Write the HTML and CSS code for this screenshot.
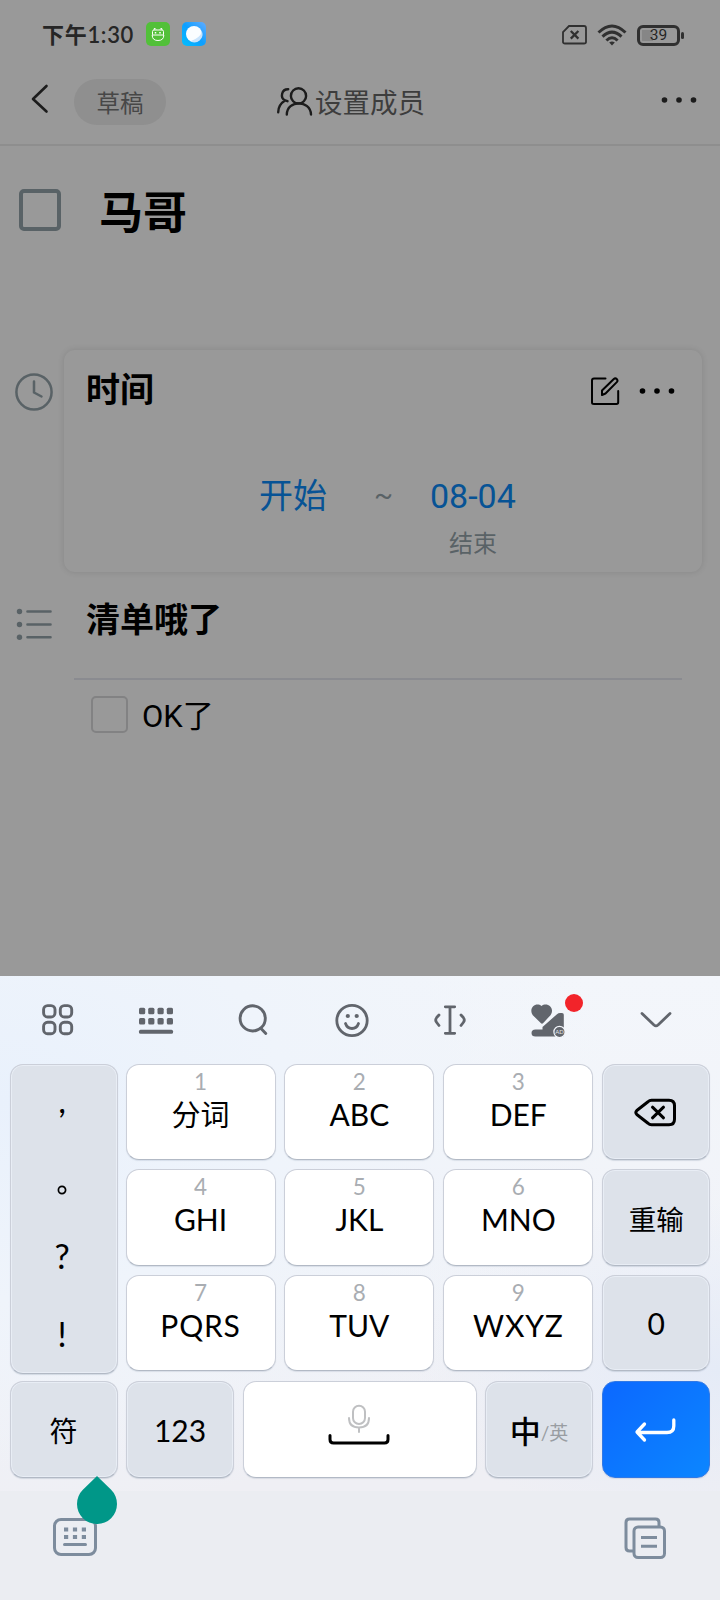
FILE: index.html
```
<!DOCTYPE html>
<html lang="zh-CN">
<head>
<meta charset="utf-8">
<title>设置成员</title>
<link rel="stylesheet" href="styles.css">
</head>
<body>
<div class="app">
  <div class="status">
    <span class="time">下午1:30</span>
    <svg class="app-icon" width="24" height="24" viewBox="0 0 24 24"><rect width="24" height="24" rx="5" fill="#52c039"/><g fill="none" stroke="#fff" stroke-width="1" stroke-linejoin="round"><path d="M6.500 12.800V9.500Q6.500 8 8 8h8q1.500 0 1.500 1.500v3.300M6.200 13h11.600q0 5.500-5.800 5.500T6.200 13zM8 8l.5-2 1.500 1.500M16 8l-.5-2L14 7.500"/></g><path d="M9.500 10v1.500M14 10v1.500" stroke="#fff" stroke-width="1.500"/></svg>
    <svg class="app-icon second" width="24" height="24" viewBox="0 0 24 24"><defs><linearGradient id="sky" x1="0" y1="1" x2="1" y2="0"><stop offset="0" stop-color="#00c0ff"/><stop offset=".5" stop-color="#0e9fff"/><stop offset="1" stop-color="#62abff"/></linearGradient></defs><rect width="24" height="24" rx="5" fill="url(#sky)"/><circle cx="12" cy="12" r="8" fill="#fafdff"/><path d="M20 9.500Q18 16 8.500 19.200A8 8 0 0 0 20 9.500z" fill="#c9e4fc"/></svg>
    <div class="status-right">
      <svg width="25" height="20" viewBox="0 0 25 20" fill="none" stroke="#303030" stroke-width="1.800"><path d="M7 1h15q2 0 2 2v14q0 1.500-2 1.500H3q-2 0-2-1.500V7z"/><path d="M8.800 6l7.600 7.600M16.400 6l-7.600 7.600" stroke-width="2.300"/></svg>
      <svg width="30" height="22" viewBox="0 0 30 22" fill="none" stroke="#303030" stroke-width="3"><path d="M1.500 8.500Q15-4.500 28.500 8.500M5.500 12.600Q15 3.500 24.500 12.600M9.400 16.500Q15 11 20.600 16.500"/><path d="M12.200 18.500q2.800-2 5.600 0L15 21.500z" fill="#303030" stroke="none"/></svg>
      <div class="battery"><span>39</span></div>
    </div>
  </div>
  <div class="header">
    <svg class="back" width="18" height="30" viewBox="0 0 18 30" fill="none" stroke="#1c1c1c" stroke-width="2.600" stroke-linecap="round" stroke-linejoin="round"><path d="M15.500 2L2 15l13.500 12.500"/></svg>
    <span class="draft">草稿</span>
    <svg class="people" width="36" height="30" viewBox="0 0 36 30" fill="none" stroke="#1c1c1c" stroke-width="2.400" stroke-linecap="round"><circle cx="21.500" cy="8.900" r="7.600"/><path d="M9.800 27.500C10 12.700 33.500 12.700 34 27.500M11.200 2.200C4.500 2 2.800 10.700 8 13.400Q1.200 17.700 1.200 25.200M8 13.400l2.500.8"/></svg>
    <span class="members">设置成员</span>
    <svg class="dots" width="36" height="8" viewBox="0 0 36 8" fill="#1c1c1c"><circle cx="3.500" cy="4" r="2.800"/><circle cx="18" cy="4" r="2.800"/><circle cx="32.500" cy="4" r="2.800"/></svg>
  </div>
  <div class="title-row"><span class="check"></span><span class="title">马哥</span></div>
  <div class="time-row">
    <svg class="clock" width="38" height="38" viewBox="0 0 38 38" fill="none" stroke="#596266" stroke-width="2.500" stroke-linecap="round" stroke-linejoin="round"><circle cx="19" cy="19" r="17.600"/><path d="M19 8.500V19.500l7.500 4"/></svg>
    <div class="card">
      <div class="card-head">
        <span class="heading">时间</span>
        <svg class="edit" width="30" height="30" viewBox="0 0 30 30" fill="none" stroke="#000" stroke-width="2" stroke-linecap="round" stroke-linejoin="round"><path d="M15.500 2.500H4Q2 2.500 2 4.500v22Q2 28 4 28h22.500q1.700 0 1.700-1.700V15"/><path d="M12 19V14.500L23.800 3q1.500-1.300 3 .1 1.400 1.500 0 3L15.500 17.500z"/></svg>
        <svg class="dots" width="36" height="8" viewBox="0 0 36 8" fill="#000"><circle cx="3.500" cy="4" r="2.800"/><circle cx="18" cy="4" r="2.800"/><circle cx="32.500" cy="4" r="2.800"/></svg>
      </div>
      <div class="range">
        <span class="date">开始</span><span class="tilde">~</span>
        <div class="end"><span class="date">08-04</span><span class="end-label">结束</span></div>
      </div>
    </div>
  </div>
  <div class="list-row">
    <svg class="list-icon" width="38" height="34" viewBox="0 0 38 34" stroke="#596266" stroke-width="2.600" stroke-linecap="round" fill="#596266"><path d="M12.500 4.500h23M12.500 17.500h23M12.500 30.300h23"/><g stroke="none"><circle cx="4.500" cy="4.500" r="2.700"/><circle cx="4.500" cy="17.500" r="2.700"/><circle cx="4.500" cy="30.300" r="2.700"/></g></svg>
    <span class="heading">清单哦了</span>
  </div>
  <div class="item"><span class="item-check"></span><span class="item-text">OK了</span></div>
</div>
<div class="keyboard">
  <div class="toolbar">
    <svg width="36" height="36" viewBox="0 0 36 36" fill="none" stroke="#61656c" stroke-width="2.900"><rect x="3.600" y="3.600" width="11.400" height="11.400" rx="4"/><rect x="20.300" y="3.600" width="11.400" height="11.400" rx="4"/><rect x="3.600" y="20.300" width="11.400" height="11.400" rx="4"/><rect x="20.300" y="20.300" width="11.400" height="11.400" rx="4"/></svg>
    <svg width="36" height="36" viewBox="0 0 36 36" fill="#61656c"><g id="krow"><rect x="1" y="5.800" width="6.200" height="6.400" rx="1.500"/><rect x="10.200" y="5.800" width="6.200" height="6.400" rx="1.500"/><rect x="19.500" y="5.800" width="6.200" height="6.400" rx="1.500"/><rect x="28.800" y="5.800" width="6.200" height="6.400" rx="1.500"/></g><use href="#krow" y="10.200"/><rect x="1" y="27.800" width="34" height="4" rx="1.500"/></svg>
    <svg width="36" height="36" viewBox="0 0 36 36" fill="none" stroke="#61656c" stroke-width="2.900" stroke-linecap="round"><circle cx="16.700" cy="16.400" r="12.600"/><path d="M25 26.500l4.800 5"/></svg>
    <svg width="36" height="36" viewBox="0 0 36 36" fill="none" stroke="#61656c" stroke-width="2.800" stroke-linecap="round"><circle cx="18" cy="18.500" r="15.200"/><path d="M11.500 21.500q1.700 5 6.500 5t6.500-5"/><g fill="#61656c" stroke="none"><circle cx="13.800" cy="14" r="2.100"/><circle cx="22.700" cy="14" r="2.100"/></g></svg>
    <svg width="36" height="36" viewBox="0 0 36 36" fill="none" stroke="#61656c" stroke-width="2.800" stroke-linecap="round"><path d="M13.300 4.800h9.400M18 5v26M13.300 31.300h9.400M7 13l-2.300 2.500q-2 2.500 0 5L7 23.500M29 13l2.300 2.500q2 2.500 0 5L29 23.500"/></svg>
    <div class="promo">
      <svg width="36" height="36" viewBox="0 0 36 36" fill="#61656c"><path d="M11 21.200L2.800 13.200C-2 6 6-.5 11.500 4 17-.5 25.500 6 20.500 13.200L13.500 20.800Q12 22.300 11 21.200z"/><path d="M1.500 31Q1.500 27.500 5.500 27.500H12.500V25L27 12.200Q28.400 11 30 11h2q1.800 0 1.800 1.800V34.500H5.500q-4 0-4-3.500z"/><circle cx="29.500" cy="30" r="5.600" stroke="#f3f6fb" stroke-width="1.200"/><text x="29.500" y="32.300" text-anchor="middle" class="ad">AD</text></svg>
      <span class="badge"></span>
    </div>
    <svg width="36" height="36" viewBox="0 0 36 36" fill="none" stroke="#61656c" stroke-width="2.800" stroke-linecap="round" stroke-linejoin="round"><path d="M4 11.500l12 11.500q2 1.800 4 0l12-11.500"/></svg>
  </div>
  <div class="pad">
    <div class="punct key gray"><span class="comma">,</span><svg width="10" height="10" viewBox="0 0 10 10"><circle cx="5" cy="5" r="3.600" fill="none" stroke="#000" stroke-width="1.700"/></svg><span class="ask">?</span><span class="bang">!</span></div>
    <div class="keys">
      <div class="key"><small>1</small><b class="cjk">分词</b></div><div class="key"><small>2</small><b>ABC</b></div><div class="key"><small>3</small><b>DEF</b></div>
      <div class="key gray"><svg class="erase" width="44" height="32" viewBox="0 0 44 32" fill="none" stroke="#000" stroke-width="3" stroke-linecap="round" stroke-linejoin="round"><path d="M17.500 3.200h17.500q5.500 0 5.500 5.500v13.600q0 5.500-5.500 5.500H17.500q-2 0-3.500-1.500L2.800 17.500q-2-2 0-4L14 4.700q1.500-1.500 3.500-1.500z"/><path d="M18.500 10.200L29.500 20.800M29.500 10.200L18.500 20.800"/></svg></div>
      <div class="key"><small>4</small><b>GHI</b></div><div class="key"><small>5</small><b>JKL</b></div><div class="key"><small>6</small><b>MNO</b></div>
      <div class="key gray"><span class="redo">重输</span></div>
      <div class="key"><small>7</small><b class="wide">PQRS</b></div><div class="key"><small>8</small><b>TUV</b></div><div class="key"><small>9</small><b class="wide">WXYZ</b></div>
      <div class="key gray"><span class="num">0</span></div>
    </div>
  </div>
  <div class="bottom">
    <div class="key gray"><span class="sym">符</span></div>
    <div class="key gray"><span class="num">123</span></div>
    <div class="key space"><svg class="mic" width="64" height="44" viewBox="0 0 64 44" fill="none" stroke-linecap="round"><g stroke="#bfc0c2" stroke-width="2"><rect x="26" y="1.800" width="12" height="18.200" rx="6"/><path d="M22 14q0 9.500 10 9.500t10-9.500M32 24v4"/></g><path d="M3 31.500v4q0 3.500 3.500 3.500h51q3.500 0 3.500-3.500v-4" stroke="#000" stroke-width="3"/></svg></div>
    <div class="key gray"><span class="zh">中</span><span class="en">/英</span></div>
    <div class="key enter"><svg width="44" height="28" viewBox="0 0 44 28" fill="none" stroke="#fff" stroke-width="3.300" stroke-linecap="round" stroke-linejoin="round"><path d="M10.500 8L3 16l7.500 8M4 16.500h29q6.800 0 6.800-6.500V4"/></svg></div>
  </div>
  <div class="nav">
    <div class="switcher">
      <svg width="44" height="40" viewBox="0 0 44 40" fill="none" stroke="#7d8c9d" stroke-width="3"><rect x="1.500" y="2.500" width="41" height="35" rx="6.500"/><path d="M11 12.500h22M11 20h22" stroke-width="4" stroke-dasharray="4.200 4.700"/><path d="M11.500 27.500h21" stroke-linecap="round"/></svg>
      <svg class="handle" width="40" height="48" viewBox="0 0 40 48"><path d="M20 0L34.140 13.860A20 20 0 1 1 5.860 13.860z" fill="#009788"/></svg>
    </div>
    <svg width="42" height="42" viewBox="0 0 42 42" fill="none" stroke="#7d8c9d" stroke-width="3"><path d="M9 34H5.500Q2 34 2 30.500V5.500Q2 2 5.500 2h26Q35 2 35 5.500V9"/><rect x="10" y="10" width="30.500" height="30.500" rx="4"/><path d="M17 20.500h16M17 29.300h16"/></svg>
  </div>
</div>
</body>
</html>
```

FILE: styles.css
```
* { box-sizing: border-box; }
body { margin: 0; width: 720px; height: 1600px; overflow: hidden; font-family: Roboto, "Noto Sans CJK SC", sans-serif; color: #000; }
svg { display: block; flex: none; }
.app { height: 976px; background: #999; }
.status { height: 68px; padding: 0 37px 0 42px; display: flex; align-items: center; }
.time { font: 600 22px/30px Lato, "Noto Sans CJK SC", sans-serif; letter-spacing: .7px; color: #262626; width: 104px; white-space: nowrap; margin-top: 2px; }
.second { margin-left: 12px; }
.status-right { margin-left: auto; display: flex; align-items: center; gap: 10px; padding-top: 2px; }
.battery { width: 43px; height: 21px; border: 3px solid #303030; border-radius: 6px; position: relative; font: 400 15.500px/15px Roboto, sans-serif; text-align: center; color: #262626; margin-right: 3px; background: linear-gradient(#868686, #868686) 2px 2px / 11px 11px no-repeat; }
.battery::after { content: ""; position: absolute; right: -7px; top: 4px; width: 3px; height: 7px; border-radius: 2px; background: #303030; }
.header { height: 78px; border-bottom: 2px solid #8e8e8e; display: flex; align-items: flex-start; padding: 11px 23px 0 31px; }
.back { margin-top: 5px; }
.draft { margin-left: 25px; width: 92px; height: 46px; border-radius: 23px; background: #8f8f8f; text-align: center; font-size: 23.500px; line-height: 51px; color: #474747; }
.people { margin: 8px 0 0 111px; }
.members { margin-left: 2px; font-size: 27.500px; line-height: 49px; color: #3d3d3d; white-space: nowrap; }
.header .dots { margin: 17px 0 0 auto; }
.title-row { height: 204px; display: flex; padding: 43px 0 0 19px; }
.check { width: 42px; height: 42px; border: 4px solid #596266; border-radius: 5px; }
.title { margin-left: 38px; font-size: 44px; line-height: 50px; font-weight: 700; }
.time-row { display: flex; padding: 0 18px 0 15px; }
.clock { margin: 23px 11px 0 0; }
.card { flex: 1; height: 222px; border-radius: 11px; box-shadow: 0 0 6px rgba(0, 0, 0, .12); padding: 22px 27px 0 22px; }
.heading { font-size: 34px; line-height: 37px; font-weight: 700; }
.card-head { display: flex; height: 34px; }
.edit { margin: 4px 19px 0 auto; }
.card-head .dots { margin-top: 15px; }
.range { display: flex; padding: 68px 0 0 173px; }
.date { color: #075395; font-size: 34px; line-height: 44px; }
.tilde { margin-left: 47px; font-size: 28px; line-height: 42px; color: #596266; width: 56px; }
.end { display: flex; flex-direction: column; align-items: center; }
.end-label { font-size: 24px; line-height: 32px; margin-top: 10px; color: #596266; }
.list-row { margin: 30px 38px 0 74px; height: 78px; border-bottom: 2px solid #8a8b90; display: flex; }
.list-row .heading { line-height: 37px; }
.list-icon { margin: 5px 33px 0 -59px; }
.item { display: flex; padding: 16px 0 0 91px; }
.item-check { width: 37px; height: 37px; border: 2px solid #828283; border-radius: 5px; margin-right: 14px; }
.item-text { font-size: 31px; line-height: 41px; }

.keyboard { height: 624px; background: linear-gradient(#ebedf2, #ebedf2) 0 515px / 100% 109px no-repeat, radial-gradient(ellipse at 100% 63%, #e5ebf7 0, transparent 30%), radial-gradient(ellipse at 0 20%, #e9f1fc 0, #eff4fb 28%, transparent 60%), linear-gradient(#f3f6fb 0, #f1f3f8 45%, #efeff4 80%); font-family: Lato, "Noto Sans CJK SC", sans-serif; }
.toolbar { height: 88px; padding: 0 46px 0 39.500px; display: flex; gap: 62.200px; align-items: center; }
.toolbar > :last-child { margin-left: auto; }
.promo { position: relative; }
.badge { position: absolute; left: 35px; top: -8px; width: 18px; height: 18px; border-radius: 50%; background: #f2242a; }
.ad { font: 6px Lato, sans-serif; fill: #e3e5e9; }
.pad { display: flex; gap: 8px; padding: 0 10px 0 9.500px; height: 317px; }
.key { background: #fff; border: 1px solid #cbcfd9; border-bottom-color: #b2b9c5; border-radius: 13px; display: flex; align-items: center; justify-content: center; height: 97px; position: relative; box-shadow: 0 1px 1px rgba(80, 100, 130, .14); }
.gray { background: #dde2ea; box-shadow: inset 0 0 0 1px #e8edf5, 0 1px 1px rgba(80, 100, 130, .18); }
.keys { display: grid; grid-template-columns: 150px 150px 150px 108px; column-gap: 8.900px; grid-template-rows: 96px 97px 96px; row-gap: 9px; }
.keys .key { height: auto; }
.keys .key:not(.gray) { flex-direction: column; justify-content: flex-start; }
.key small { font-size: 22.500px; line-height: 24px; color: #a9adb2; margin-top: 5px; }
.key b { font-weight: 400; font-size: 30px; line-height: 36px; margin-top: 2px; }
.key .cjk { font-size: 29px; margin-top: 3px; }
.key .wide { letter-spacing: .8px; }
.erase { margin-top: 2px; }
.punct { width: 108px; height: 310px; flex: none; flex-direction: column; font-size: 34px; justify-content: flex-start; padding-right: 3px; }
.punct span { line-height: 40px; }
.comma { margin-top: 15px; }
.punct svg { margin-top: 65px; }
.ask { margin-top: 41px; }
.bang { margin-top: 38px; }
.redo { font-size: 27.500px; }
.num { font-size: 30px; }
.bottom { display: grid; grid-template-columns: 108px 108px 234px 108px 108px; justify-content: space-between; padding: 0 10.500px 0 9.500px; }
.sym { font-size: 28px; }
.mic { margin: 0 2px 7px 0; }
.zh { font-size: 31px; font-weight: 500; }
.en { font-size: 19px; color: #999da2; margin-top: 4px; }
.enter { background: linear-gradient(135deg, #0c68ff, #0c86ff); border-color: #3279e5; }
.nav { padding: 39px 54px 0 53px; display: flex; justify-content: space-between; }
.switcher { position: relative; }
.handle { position: absolute; left: 24px; top: -41px; }
```
